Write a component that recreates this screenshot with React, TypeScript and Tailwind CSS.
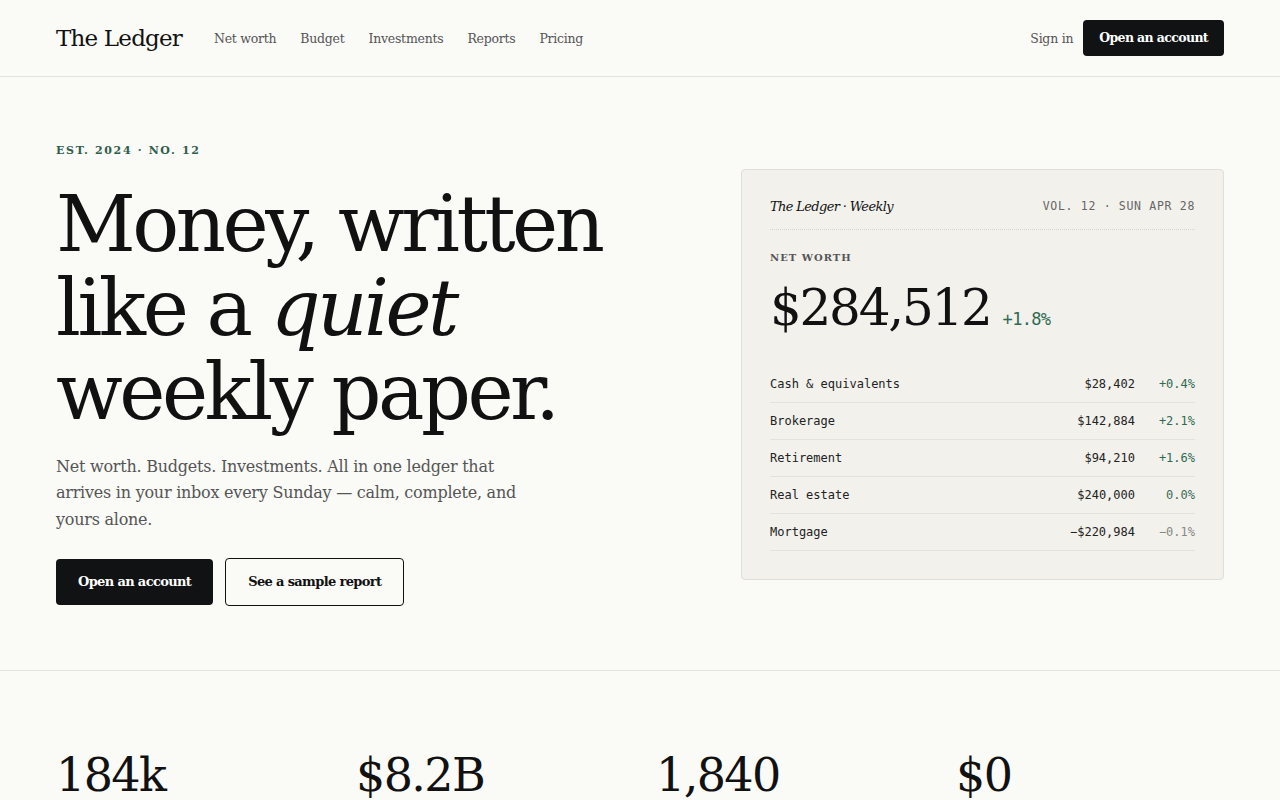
import React from 'react';

const serif = "font-['DejaVu_Serif',serif]";
const mono = "font-['DejaVu_Sans_Mono',monospace]";

const holdings = [
  { name: 'Cash & equivalents', value: '$28,402', change: '+0.4%', tone: 'up' },
  { name: 'Brokerage', value: '$142,884', change: '+2.1%', tone: 'up' },
  { name: 'Retirement', value: '$94,210', change: '+1.6%', tone: 'up' },
  { name: 'Real estate', value: '$240,000', change: '0.0%', tone: 'flat' },
  { name: 'Mortgage', value: '−$220,984', change: '−0.1%', tone: 'down' },
];

const stats = ['184k', '$8.2B', '1,840', '$0'];

function Nav() {
  return (
    <header className="border-b border-[#e4e3dd]">
      <div className="flex h-[76px] items-center justify-between px-14">
        <div className="flex items-center gap-8">
          <a className="text-[23px] tracking-[-0.035em] text-[#111]">The Ledger</a>
          <nav className="flex items-center gap-6 pt-0.5 text-[12.5px] tracking-[-0.02em] text-[#555]">
            <a>Net worth</a>
            <a>Budget</a>
            <a>Investments</a>
            <a>Reports</a>
            <a>Pricing</a>
          </nav>
        </div>
        <div className="flex items-center gap-2.5">
          <a className="pt-0.5 text-[12.5px] tracking-[-0.02em] text-[#555]">Sign in</a>
          <button className="h-9 rounded-[4px] bg-[#111213] px-4 text-[12.5px] font-bold tracking-[-0.05em] text-white">
            Open an account
          </button>
        </div>
      </div>
    </header>
  );
}

function LedgerCard() {
  return (
    <div className="w-[483px] rounded-[4px] border border-[#dfded8] bg-[#f2f1ec] px-7 pb-7 pt-[27px]">
      <div className="flex items-center justify-between border-b border-dotted border-[#d6d5cf] pb-3">
        <span className="text-[13px] italic tracking-[-0.05em] text-[#111]">The Ledger · Weekly</span>
        <span className={`${mono} text-[11.5px] tracking-[0.06em] text-[#666]`}>VOL. 12 · SUN APR 28</span>
      </div>
      <div className="mt-5 text-[10px] font-bold tracking-[0.1em] text-[#555]">NET WORTH</div>
      <div className="mt-[18px] flex items-baseline gap-3">
        <span className="text-[50px] leading-none tracking-[-0.045em] text-[#111]">$284,512</span>
        <span className={`${mono} text-[17px] tracking-[-0.04em] text-[#2f6b52]`}>+1.8%</span>
      </div>
      <div className={`${mono} mt-[33px] text-[12px]`}>
        {holdings.map((h) => (
          <div key={h.name} className="flex h-[37px] items-center border-b border-[#e3e2dc] text-[#222]">
            <span className="flex-1">{h.name}</span>
            <span className="text-right">{h.value}</span>
            <span
              className={`w-[60px] text-right ${
                h.tone === 'up' ? 'text-[#2f6b52]' : h.tone === 'flat' ? 'text-[#3e6b5a]' : 'text-[#888]'
              }`}
            >
              {h.change}
            </span>
          </div>
        ))}
      </div>
    </div>
  );
}

export default function App() {
  return (
    <div className={`${serif} min-h-screen bg-[#fafaf7] text-[#111]`}>
      <Nav />

      <section className="border-b border-[#e4e3dd]">
        <div className="flex items-center justify-between px-14 pb-16 pt-[66px]">
          <div>
            <div className="text-[11px] font-bold tracking-[0.15em] text-[#2f5e4c]">EST. 2024 · NO. 12</div>
            <h1 className="mt-[22px] text-[78px] leading-[84px] tracking-[-0.045em] text-[#111]">
              Money, written
              <br />
              like a <em className="italic">quiet</em>
              <br />
              weekly paper.
            </h1>
            <p className="mt-5 w-[470px] text-[16px] leading-[26.5px] tracking-[-0.015em] text-[#555]">
              Net worth. Budgets. Investments. All in one ledger that arrives in your inbox every Sunday — calm,
              complete, and yours alone.
            </p>
            <div className="mt-[25px] flex items-center gap-3">
              <button className="h-[46px] rounded-[4px] bg-[#111213] px-[22px] text-[13px] font-bold tracking-[-0.05em] text-white">
                Open an account
              </button>
              <button className="h-[48px] rounded-[4px] border border-[#111] px-[22px] text-[13px] font-bold tracking-[-0.05em] text-[#111]">
                See a sample report
              </button>
            </div>
          </div>
          <LedgerCard />
        </div>
      </section>

      <section className="px-14 pt-[81px]">
        <div className="grid grid-cols-4 gap-8">
          {stats.map((s) => (
            <div key={s} className="text-[46px] leading-none tracking-[-0.035em] text-[#111]">
              {s}
            </div>
          ))}
        </div>
      </section>
    </div>
  );
}
